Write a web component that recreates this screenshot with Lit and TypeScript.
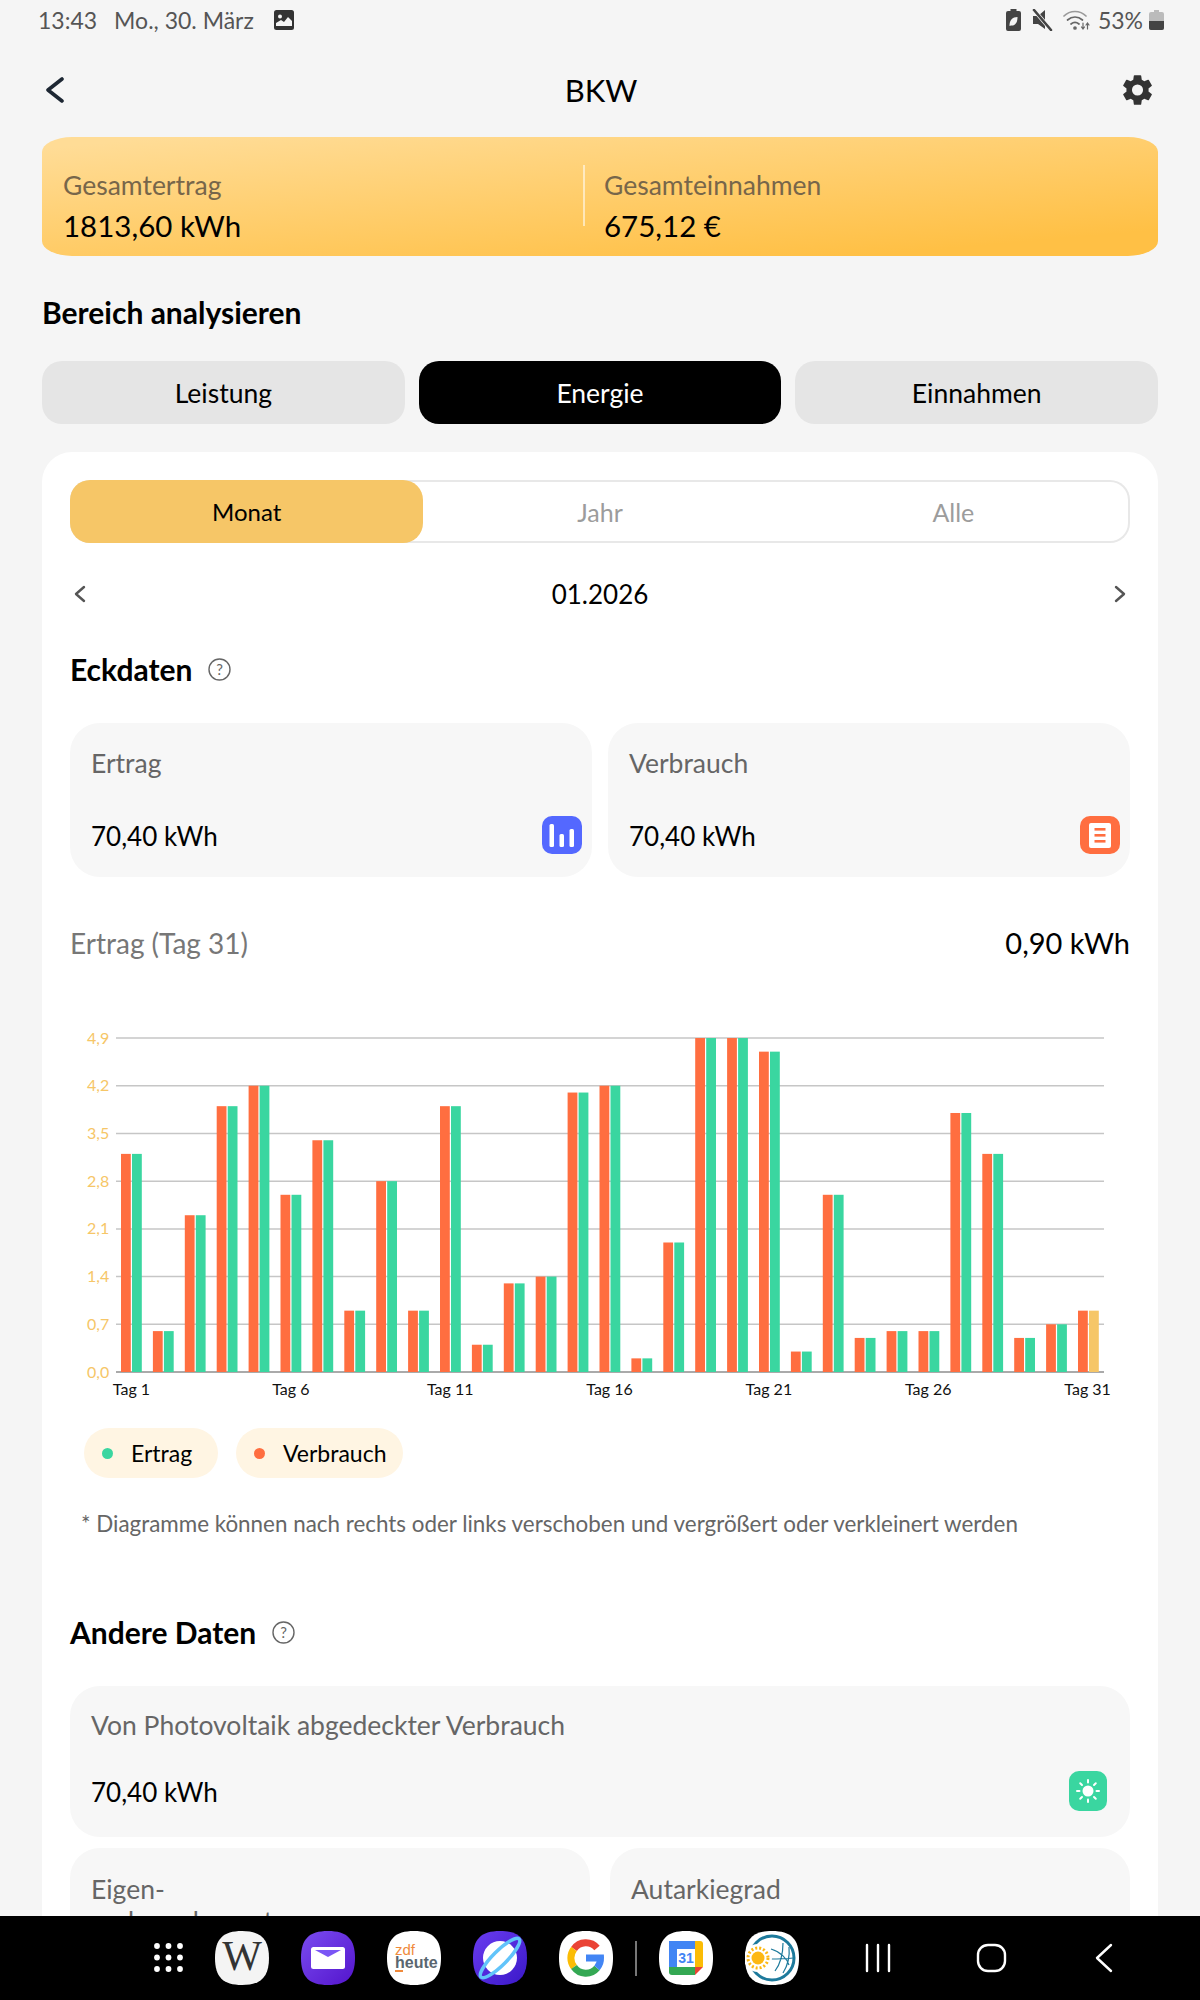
import { css, html, LitElement, svg } from 'lit';
import { customElement } from 'lit/decorators.js';

const DAYS = [3.2, 0.6, 2.3, 3.9, 4.2, 2.6, 3.4, 0.9, 2.8, 0.9, 3.9, 0.4, 1.3, 1.4, 4.1, 4.2, 0.2, 1.9, 4.9, 4.9, 4.7, 0.3, 2.6, 0.5, 0.6, 0.6, 3.8, 3.2, 0.5, 0.7, 0.9];
const TICKS = ['0,0', '0,7', '1,4', '2,1', '2,8', '3,5', '4,2', '4,9'];
const BASE_Y = 1372;
const UNIT = 68.16; // px per kWh
const FONT = 'Lato, "Open Sans", sans-serif';

const chevron = (left: boolean, w: number, h: number, sw: number, color: string) => html`
  <svg width=${w} height=${h} viewBox="0 0 ${w} ${h}" fill="none">
    <path d=${left ? `M${w - 2} 2 L2 ${h / 2} L${w - 2} ${h - 2}` : `M2 2 L${w - 2} ${h / 2} L2 ${h - 2}`}
      stroke=${color} stroke-width=${sw} stroke-linecap="round" stroke-linejoin="round" />
  </svg>`;

const help = () => html`
  <svg class="help" width="23" height="23" viewBox="0 0 23 23">
    <circle cx="11.5" cy="11.5" r="10.5" fill="none" stroke="#666" stroke-width="1.4" />
    <text x="11.5" y="17" text-anchor="middle" font-size="15" fill="#666" font-family=${FONT}>?</text>
  </svg>`;

const barsIcon = html`
  <svg width="40" height="38" viewBox="0 0 40 38">
    <rect width="40" height="38" rx="10" fill="#5468ff" />
    <rect x="7.5" y="8" width="4.5" height="23" rx="1.5" fill="#fff" />
    <rect x="17.5" y="18" width="4.5" height="13" rx="1.5" fill="#fff" />
    <rect x="27.5" y="13" width="4.5" height="18" rx="1.5" fill="#fff" />
  </svg>`;

const docIcon = html`
  <svg width="40" height="38" viewBox="0 0 40 38">
    <rect width="40" height="38" rx="10" fill="#ff6e40" />
    <rect x="9" y="7" width="22" height="25" rx="2" fill="#fff" />
    <rect x="14.5" y="12" width="11" height="2.6" fill="#ff6e40" />
    <rect x="14.5" y="18" width="11" height="2.6" fill="#ff6e40" />
    <rect x="14.5" y="24" width="11" height="2.6" fill="#ff6e40" />
  </svg>`;

const sunIcon = html`
  <svg width="38" height="40" viewBox="0 0 38 40">
    <rect width="38" height="40" rx="10" fill="#3ad6a0" />
    <circle cx="19" cy="20" r="5.5" fill="#fff" />
    ${[0, 45, 90, 135, 180, 225, 270, 315].map(
      (a) => svg`<rect x="18" y="8" width="2" height="4.5" rx="1" fill="#fff" transform="rotate(${a} 19 20)" />`,
    )}
  </svg>`;

@customElement('app-root')
export class AppRoot extends LitElement {
  static styles = css`
    :host {
      display: flex;
      flex-direction: column;
      width: 1200px;
      height: 2000px;
      overflow: hidden;
      background: #f5f5f5;
      font-family: Lato, "Open Sans", sans-serif;
      color: #000;
    }

    /* status bar */
    .status {
      flex: none;
      height: 40px;
      display: flex;
      align-items: center;
      padding: 0 36px 0 38px;
      font-size: 23px;
      color: #555;
    }
    .status .date { margin-left: 17px; margin-right: 20px; }
    .status .right { margin-left: auto; display: flex; align-items: center; gap: 10px; }
    .status .pct { margin-left: -2px; margin-right: -4px; }

    .scroll {
      flex: 1;
      min-height: 0;
      overflow: hidden;
      padding: 0 42px;
    }

    .header {
      height: 40px;
      padding: 30px 2px 27px 4px;
      display: grid;
      grid-template-columns: 1fr auto 1fr;
      align-items: center;
    }
    .header .name {
      font-size: 31px;
      line-height: 40px;
    }
    .header .gear { justify-self: end; }

    .banner {
      height: 119px;
      display: flex;
      border-radius: 30px / 15px;
      background: linear-gradient(175deg, #ffdc96 5%, #ffc045 88%);
    }
    .banner > div { margin-top: 28px; height: 61px; }
    .banner > div:first-child { flex: 0 0 520px; padding-left: 21px; }
    .banner > div:last-child { flex: 1; border-left: 2px solid rgba(255, 255, 255, 0.55); padding-left: 19px; }
    .banner .label { font-size: 26.5px; line-height: 30px; color: #77664a; margin-top: 5px; }
    .banner .value { font-size: 29.5px; line-height: 40px; margin-top: 6px; }

    h2 {
      margin: 0;
      font-size: 30px;
      line-height: 40px;
      font-weight: 700;
    }
    .section { margin: 36px 0 29px; }

    .tabs {
      display: grid;
      grid-template-columns: repeat(3, 1fr);
      gap: 14px;
      margin-bottom: 28px;
    }
    .tab {
      height: 63px;
      border-radius: 20px;
      background: #e5e5e5;
      display: flex;
      align-items: center;
      justify-content: center;
      font-size: 26.5px;
    }
    .tab.on { background: #000; color: #fff; }

    .card {
      background: #fff;
      border-radius: 30px;
      padding: 28px;
    }

    .segment {
      display: grid;
      grid-template-columns: repeat(3, 1fr);
      height: 63px;
      border-radius: 20px;
      box-shadow: inset 0 0 0 2px #e8e8e8;
    }
    .segment div {
      display: flex;
      align-items: center;
      justify-content: center;
      font-size: 25px;
      color: #9c9c9c;
      border-radius: 20px;
    }
    .segment .on { background: #f6c667; color: #000; font-size: 24px; }

    .dateline {
      margin-top: 31px;
      height: 40px;
      padding: 0 4px;
      display: flex;
      align-items: center;
      justify-content: space-between;
      font-size: 26px;
    }

    .heading { display: flex; align-items: center; gap: 16px; }
    .heading.first { margin-top: 35px; }
    .heading.other { margin-top: 73px; }

    .stats { display: grid; grid-template-columns: 1fr 1fr; gap: 16px; margin-top: 34px; }
    .stat {
      background: #f7f7f7;
      border-radius: 30px;
      padding: 20px 10px 21px 21px;
    }
    .stat .label { font-size: 26.5px; line-height: 40px; color: #666; }
    .stat .row {
      display: flex;
      align-items: center;
      justify-content: space-between;
      height: 40px;
      margin-top: 33px;
      font-size: 26px;
    }
    .stat .row svg { margin-top: -2px; }
    .wide { margin-top: 34px; padding: 19px 23px 25px 21px; }
    .wide .row { margin-top: 27px; }

    .lower { display: grid; grid-template-columns: 1fr 1fr; gap: 20px; margin-top: 11px; }
    .lower .stat { padding-top: 25px; }
    .lower .label { line-height: 32px; }

    .chartline {
      margin-top: 46px;
      display: flex;
      align-items: center;
      justify-content: space-between;
      line-height: 40px;
    }
    .chartline .what { font-size: 28px; color: #777; }
    .chartline .amount { font-size: 29px; }

    svg.chart { display: block; margin-top: 57px; width: 1060px; height: 390px; }

    .legend { display: flex; gap: 18px; margin: 18px 0 0 14px; }
    .pill {
      box-sizing: border-box;
      height: 50px;
      border-radius: 25px;
      background: #fff5e3;
      display: flex;
      align-items: center;
      gap: 18px;
      padding-left: 18px;
      font-size: 23px;
    }
    .pill.yield { width: 134px; }
    .pill.usage { width: 167px; }
    .dot { width: 11px; height: 11px; border-radius: 50%; }
    .dot.green { background: #3ad6a0; }
    .dot.orange { background: #ff6e40; }

    .note {
      margin: 31px 0 0 11px;
      font-size: 22.4px;
      line-height: 30px;
      color: #666;
    }

    /* navigation bar */
    .nav {
      flex: none;
      height: 84px;
      background: #000;
      display: flex;
      align-items: center;
      padding-left: 154px;
    }
    .nav .apps { display: flex; align-items: center; gap: 32px; margin-left: 31px; }
    .nav .sep { width: 1.5px; height: 35px; background: #777; margin: 0 -10px; }
    .nav .soft { display: block; margin-left: 66px; }
    .app { width: 54px; height: 54px; display: block; }
  `;

  private renderChart() {
    const gridY = TICKS.map((_, i) => BASE_Y - i * 47.7);
    return html`
      <svg class="chart" viewBox="70 1020 1060 390">
        ${gridY.map((y, i) => svg`
          <line x1="116" x2="1104" y1=${y} y2=${y} stroke=${i === 0 ? '#aaa' : '#c6c6c6'} stroke-width=${i === 0 ? 2 : 1.5} />
          <text x="87" y=${y + 5.5} font-size="16" fill="#f6c667" font-family=${FONT}>${TICKS[i]}</text>`)}
        ${DAYS.map((v, i) => {
          const x = 121 + i * 31.9;
          const h = v * UNIT;
          return svg`
            <rect x=${x} y=${BASE_Y - h} width="9.8" height=${h} fill="#ff6e40" />
            <rect x=${x + 11} y=${BASE_Y - h} width="9.8" height=${h} fill=${i === 30 ? '#f6c667' : '#3ad6a0'} />`;
        })}
        ${[1, 6, 11, 16, 21, 26, 31].map((d) => {
          const x = 131.5 + (d - 1) * 31.87;
          return svg`<text x=${x} y="1395" text-anchor="middle" font-size="16" fill="#111" font-family=${FONT}>Tag ${d}</text>`;
        })}
      </svg>`;
  }

  private renderStatus() {
    return html`
      <div class="status">
        <span>13:43</span>
        <span class="date">Mo., 30. März</span>
        <svg width="20" height="20" viewBox="0 0 20 20">
          <rect width="20" height="20" rx="2.5" fill="#333" />
          <circle cx="6" cy="6.5" r="2" fill="#f5f5f5" />
          <path d="M2 16 L2 13 L7 10 L10 12 L14 7 L18 11 L18 16 Z" fill="#f5f5f5" />
        </svg>
        <div class="right">
          <svg width="15" height="22" viewBox="0 0 15 22">
            <path d="M4.5 0h6v2h2.500a2 2 0 0 1 2 2v16a2 2 0 0 1-2 2H2a2 2 0 0 1-2-2V4a2 2 0 0 1 2-2h2.500z" fill="#444" />
            <path d="M3.500 17c0-6 3-9 8-9 0 6-2.500 9-6.500 8.500z" fill="#f5f5f5" />
          </svg>
          <svg width="22" height="22" viewBox="0 0 22 22">
            <path d="M2 7h5l7-6v19l-7-5H2z" fill="#444" />
            <path d="M3 1 L20 21" stroke="#f5f5f5" stroke-width="4" />
            <path d="M3 1 L20 21" stroke="#444" stroke-width="2.600" stroke-linecap="round" />
          </svg>
          <svg width="27" height="22" viewBox="0 0 27 22" fill="none" stroke="#666" stroke-width="1.700" stroke-linecap="round">
            <path d="M1 7 C7 1 17 1 23 7" stroke="#999" />
            <path d="M4.500 11 C9 7 15 7 19.500 11" />
            <path d="M8 15 C10.500 13 13.500 13 16 15" />
            <circle cx="12" cy="19" r="1" fill="#666" />
            <path d="M20 14v6M18.500 18l1.500 2 1.500-2M24.500 20v-6M23 16l1.500-2 1.500 2" stroke-width="1.200" />
          </svg>
          <span class="pct">53%</span>
          <svg width="15" height="20" viewBox="0 0 15 20">
            <path d="M5 0h5v2h3a2 2 0 0 1 2 2v14a2 2 0 0 1-2 2H2a2 2 0 0 1-2-2V4a2 2 0 0 1 2-2h3z" fill="#bbb" />
            <path d="M0 11h15v7a2 2 0 0 1-2 2H2a2 2 0 0 1-2-2z" fill="#444" />
          </svg>
        </div>
      </div>`;
  }

  private renderApps() {
    const squircle = 'M27 0C46 0 54 8 54 27S46 54 27 54 0 46 0 27 8 0 27 0Z';
    return html`
      <svg class="app" viewBox="0 0 54 54"><path d=${squircle} fill="#f4f4f4" />
        <text x="27" y="39" text-anchor="middle" font-size="42" font-family="Liberation Serif, serif" fill="#333">W</text></svg>
      <svg class="app" viewBox="0 0 54 54">
        <defs><linearGradient id="mail" x1="0" y1="0" x2="1" y2="1"><stop offset="0" stop-color="#7a4cf0" /><stop offset="1" stop-color="#5314cc" /></linearGradient></defs>
        <path d=${squircle} fill="url(#mail)" />
        <rect x="10" y="16" width="34" height="22" rx="2.500" fill="#fff" />
        <path d="M14 19h26L27 26Z" fill="#7a55f5" /></svg>
      <svg class="app" viewBox="0 0 54 54"><path d=${squircle} fill="#fff" />
        <text x="8" y="24" font-size="15" font-family="Liberation Sans, sans-serif" fill="#f08a3c">zdf</text>
        <text x="8" y="37" font-size="16" font-weight="700" font-family="Liberation Sans, sans-serif" fill="#5a6670">heute</text>
        <rect x="8" y="39" width="8" height="2" fill="#f08a3c" /></svg>
      <svg class="app" viewBox="0 0 54 54">
        <defs><linearGradient id="web" x1="0" y1="0" x2="1" y2="1"><stop offset="0" stop-color="#6a3cf0" /><stop offset="1" stop-color="#3a18c8" /></linearGradient></defs>
        <path d=${squircle} fill="url(#web)" />
        <circle cx="27" cy="27" r="17" fill="#fff" />
        <ellipse cx="27" cy="27" rx="27" ry="7" transform="rotate(-45 27 27)" fill="none" stroke="#62c4fa" stroke-width="3.500" /></svg>
      <svg class="app" viewBox="0 0 54 54"><path d=${squircle} fill="#fff" />
        <g fill="none" stroke-width="7">
          <path d="M38 17A14.500 14.500 0 0 0 15 18" stroke="#ea4335" />
          <path d="M15 18A14.500 14.500 0 0 0 15 36" stroke="#fbbc05" />
          <path d="M15 36A14.500 14.500 0 0 0 38 37" stroke="#34a853" />
          <path d="M38 37A14.500 14.500 0 0 0 41.500 27H27" stroke="#4285f4" />
        </g></svg>
      <div class="sep"></div>
      <svg class="app" viewBox="0 0 54 54"><path d=${squircle} fill="#fff" />
        <rect x="10" y="10" width="34" height="34" rx="3" fill="#fff" />
        <path d="M13 10h23v8H10v-5a3 3 0 0 1 3-3Z" fill="#4285f4" />
        <rect x="10" y="10" width="8" height="27" fill="#4285f4" />
        <path d="M36 10h5a3 3 0 0 1 3 3v23h-8Z" fill="#fbbc05" />
        <path d="M10 36h26v8H13a3 3 0 0 1-3-3Z" fill="#34a853" />
        <path d="M36 44v-8h8Z" fill="#ea4335" />
        <text x="27" y="32" text-anchor="middle" font-size="14" font-weight="700" font-family="Liberation Sans, sans-serif" fill="#4285f4">31</text></svg>
      <svg class="app" viewBox="0 0 54 54"><path d=${squircle} fill="#fff" />
        <circle cx="27" cy="27" r="22" fill="none" stroke="#1d7a9c" stroke-width="3" />
        <g fill="none" stroke="#1d7a9c" stroke-width="1.200">
          <path d="M26 18C36 21 42 28 44 34M24 28C32 28 40 28 48 27M30 40C36 32 38 22 38 12M38 42C43 34 45 26 44 16" />
        </g>
        <circle cx="13" cy="27" r="14" fill="#fff" />
        <circle cx="13" cy="27" r="6.500" fill="#fdb813" />
        <circle cx="13" cy="27" r="10" fill="none" stroke="#fdb813" stroke-width="3" stroke-dasharray="2 2" /></svg>`;
  }

  render() {
    return html`
      ${this.renderStatus()}
      <div class="scroll">
        <div class="header">
          ${chevron(true, 18, 26, 3.6, '#1d2733')}
          <div class="name">BKW</div>
          <svg class="gear" width="37" height="38" viewBox="0 0 24 24">
            <path fill="#333" d="M19.140 12.940c.04-.3.060-.61.060-.94s-.020-.64-.070-.94l2.030-1.580a.490.490 0 0 0 .12-.61l-1.920-3.320a.490.490 0 0 0-.59-.22l-2.390.96a7 7 0 0 0-1.620-.94l-.36-2.540a.480.480 0 0 0-.480-.41h-3.840a.470.470 0 0 0-.47.410l-.36 2.540a7.300 7.300 0 0 0-1.630.94l-2.390-.96a.480.480 0 0 0-.59.220L2.740 8.870a.470.470 0 0 0 .12.61l2.030 1.580c-.05.3-.070.630-.070.94s.020.64.070.94l-2.030 1.580a.490.490 0 0 0-.12.61l1.920 3.320c.12.220.37.290.59.220l2.390-.96c.5.380 1.030.7 1.620.94l.36 2.540c.05.240.24.410.48.410h3.840c.24 0 .44-.170.47-.410l.36-2.540a7 7 0 0 0 1.620-.94l2.390.96c.22.080.47 0 .59-.22l1.920-3.320a.470.470 0 0 0-.12-.61zM12 15.600a3.600 3.600 0 1 1 0-7.200 3.600 3.600 0 0 1 0 7.200z" />
          </svg>
        </div>

        <div class="banner">
          <div>
            <div class="label">Gesamtertrag</div>
            <div class="value">1813,60 kWh</div>
          </div>
          <div>
            <div class="label">Gesamteinnahmen</div>
            <div class="value">675,12 €</div>
          </div>
        </div>

        <h2 class="section">Bereich analysieren</h2>
        <div class="tabs">
          <div class="tab">Leistung</div>
          <div class="tab on">Energie</div>
          <div class="tab">Einnahmen</div>
        </div>

        <div class="card">
          <div class="segment">
            <div class="on">Monat</div>
            <div>Jahr</div>
            <div>Alle</div>
          </div>

          <div class="dateline">
            ${chevron(true, 12, 18, 2.4, '#555')}
            <span>01.2026</span>
            ${chevron(false, 12, 18, 2.4, '#555')}
          </div>

          <div class="heading first"><h2>Eckdaten</h2>${help()}</div>
          <div class="stats">
            <div class="stat">
              <div class="label">Ertrag</div>
              <div class="row"><span>70,40 kWh</span>${barsIcon}</div>
            </div>
            <div class="stat">
              <div class="label">Verbrauch</div>
              <div class="row"><span>70,40 kWh</span>${docIcon}</div>
            </div>
          </div>

          <div class="chartline">
            <span class="what">Ertrag (Tag 31)</span>
            <span class="amount">0,90 kWh</span>
          </div>
          ${this.renderChart()}

          <div class="legend">
            <div class="pill yield"><span class="dot green"></span>Ertrag</div>
            <div class="pill usage"><span class="dot orange"></span>Verbrauch</div>
          </div>
          <div class="note">* Diagramme können nach rechts oder links verschoben und vergrößert oder verkleinert werden</div>

          <div class="heading other"><h2>Andere Daten</h2>${help()}</div>
          <div class="stat wide">
            <div class="label">Von Photovoltaik abgedeckter Verbrauch</div>
            <div class="row"><span>70,40 kWh</span>${sunIcon}</div>
          </div>
          <div class="lower">
            <div class="stat"><div class="label">Eigen-<br />verbrauchsquote</div></div>
            <div class="stat"><div class="label">Autarkiegrad</div></div>
          </div>
        </div>
      </div>

      <div class="nav">
        <svg width="30" height="30" viewBox="0 0 30 30" fill="#fff">
          ${[3, 14.5, 26].flatMap((y) => [3, 14.5, 26].map((x) => svg`<circle cx=${x} cy=${y} r="2.9" />`))}
        </svg>
        <div class="apps">${this.renderApps()}</div>
        <svg class="soft" width="280" height="30" viewBox="0 0 280 30" fill="none" stroke="#fff" stroke-width="2.4" stroke-linecap="round" stroke-linejoin="round">
          <path d="M2 2v26M13 2v26M24 2v26" />
          <rect x="113" y="2" width="27" height="26" rx="10" />
          <path d="M246 2L232 15l14 13" />
        </svg>
      </div>
    `;
  }
}

declare global {
  interface HTMLElementTagNameMap {
    'app-root': AppRoot;
  }
}
